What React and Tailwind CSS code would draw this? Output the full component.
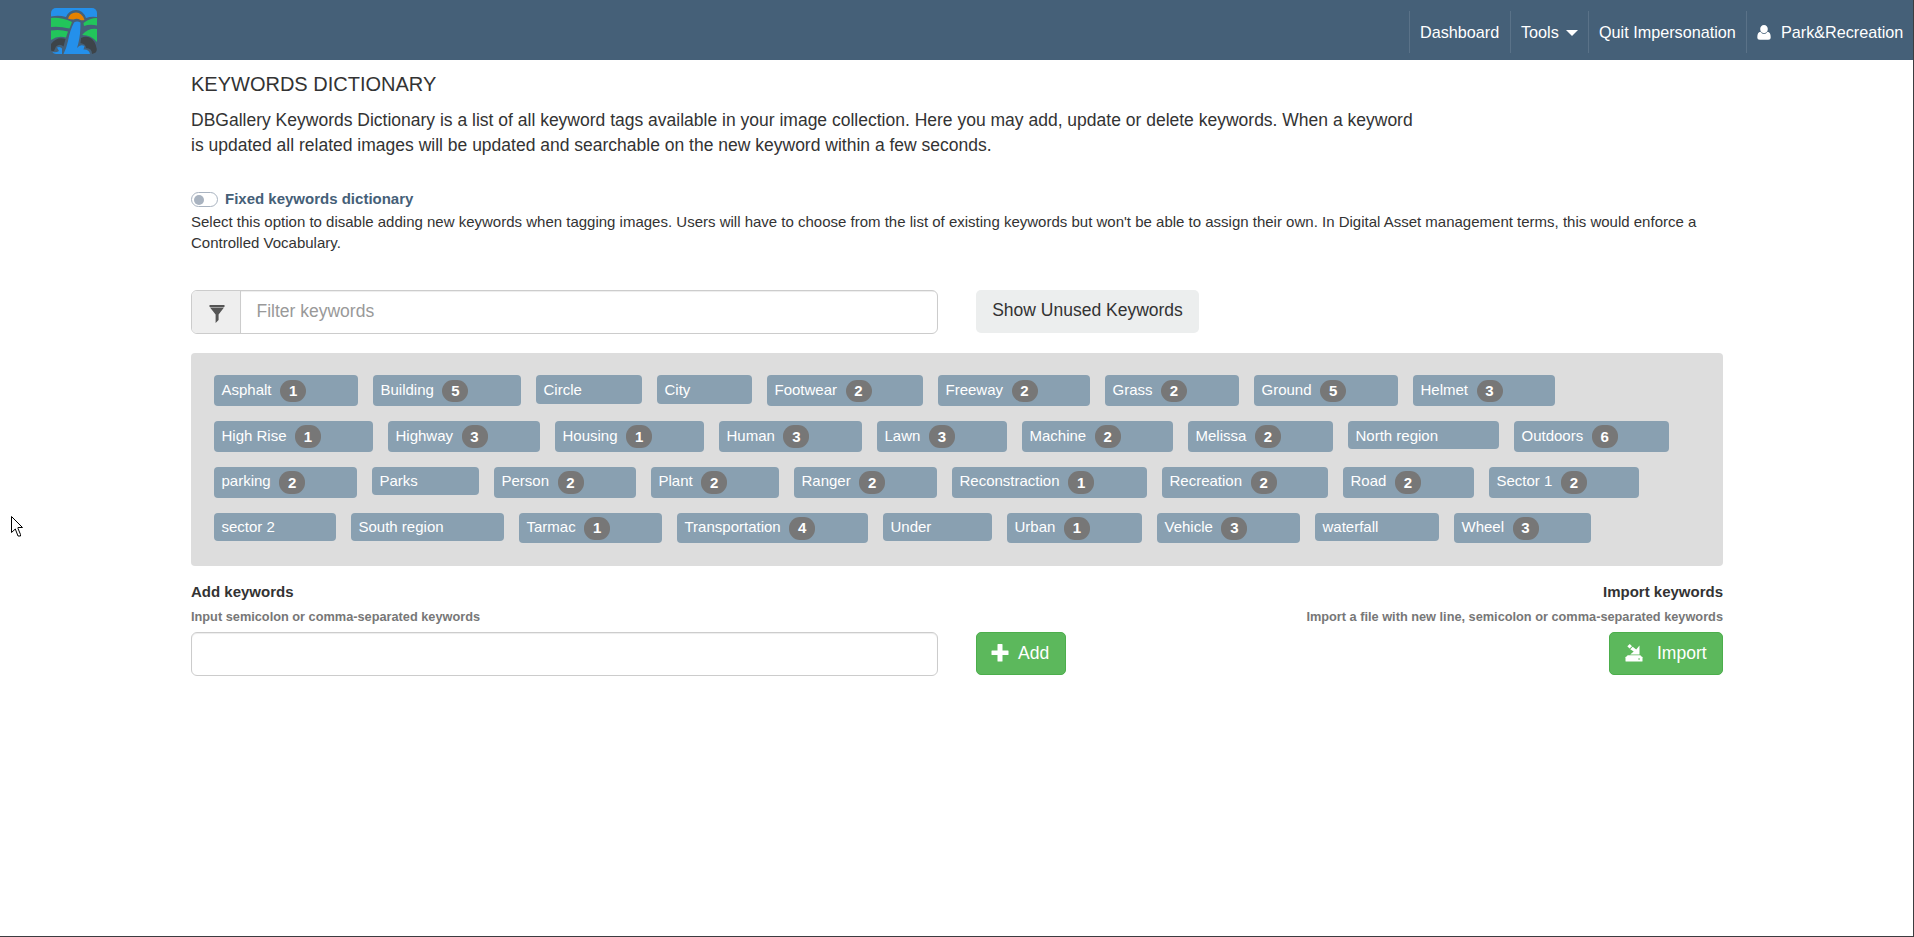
const keywords = [
  ["Asphalt", 1, "w-[144px]"],
  ["Building", 5, "w-[148px]"],
  ["Circle", 0, "w-[106px]"],
  ["City", 0, "w-[95px]"],
  ["Footwear", 2, "w-[156px]"],
  ["Freeway", 2, "w-[152px]"],
  ["Grass", 2, "w-[134px]"],
  ["Ground", 5, "w-[144px]"],
  ["Helmet", 3, "w-[142px]"],
  ["High Rise", 1, "w-[159px]"],
  ["Highway", 3, "w-[152px]"],
  ["Housing", 1, "w-[149px]"],
  ["Human", 3, "w-[143px]"],
  ["Lawn", 3, "w-[130px]"],
  ["Machine", 2, "w-[151px]"],
  ["Melissa", 2, "w-[145px]"],
  ["North region", 0, "w-[151px]"],
  ["Outdoors", 6, "w-[155px]"],
  ["parking", 2, "w-[143px]"],
  ["Parks", 0, "w-[107px]"],
  ["Person", 2, "w-[142px]"],
  ["Plant", 2, "w-[128px]"],
  ["Ranger", 2, "w-[143px]"],
  ["Reconstraction", 1, "w-[195px]"],
  ["Recreation", 2, "w-[166px]"],
  ["Road", 2, "w-[131px]"],
  ["Sector 1", 2, "w-[150px]"],
  ["sector 2", 0, "w-[122px]"],
  ["South region", 0, "w-[153px]"],
  ["Tarmac", 1, "w-[143px]"],
  ["Transportation", 4, "w-[191px]"],
  ["Under", 0, "w-[109px]"],
  ["Urban", 1, "w-[135px]"],
  ["Vehicle", 3, "w-[143px]"],
  ["waterfall", 0, "w-[124px]"],
  ["Wheel", 3, "w-[137px]"],
];

function Logo() {
  return (
    <svg className="size-[46px]" viewBox="0 0 46 46">
      <defs>
        <clipPath id="logo-clip"><rect width="46" height="46" rx="5" /></clipPath>
      </defs>
      <g clipPath="url(#logo-clip)">
        <path d="M0 0H46V9Q40 8 35 10Q32 2 25 2Q18 2 15 9Q8 7 0 8.500Z" fill="#2490eb" />
        <path d="M17 10.500Q19 4.500 25 4.500Q31 4.500 33.500 12Q31 12.500 29.500 12Q26 10 22.500 11.500Q19 11.500 17 10.500Z" fill="#e68200" />
        <path d="M0 10Q10 9 21 14L18.500 20.500Q8 18 0 19Z" fill="#22c55b" />
        <path d="M0 22.500Q9 21 17 23.500L15 29.500Q7 27 0 32Z" fill="#22c55b" />
        <path d="M32.500 15Q39 10 46 10V17.500Q39 16 33 18Z" fill="#22c55b" />
        <path d="M31.500 26.500Q37 20 46 21V34Q40 27 31.500 27Z" fill="#22c55b" />
        <path d="M0 36Q6 28 14.500 31L12.500 38.500Q9 35 5 38.500L3 43H0Z" fill="#3d4449" />
        <path d="M30 30Q36 27 41 31Q46 36 46 45L41 46Q41 40 35 40Q35 36 29.500 35Z" fill="#3d4449" />
        <path d="M23 14.500Q26 12.500 29.500 14.500Q29.500 27 27.500 34.500Q27 37 26 40Q29 36 33.500 38L32.500 41.500Q38 41 39 46H12.500Q15.500 40 17 33Q19 22 23 14.500Z" fill="#2490eb" />
        <path d="M1.500 44Q5 45 8 43L6 39.500Q9 38 11 40.500V46H2Z" fill="#2490eb" />
      </g>
    </svg>
  );
}

function UserIcon() {
  return (
    <svg className="h-[15px] w-[14px]" viewBox="0 0 14 15" fill="currentColor">
      <path d="M7 0C9.300 0 10.800 1.800 10.800 4C10.800 6.300 9.300 8.200 7 8.200C4.700 8.200 3.200 6.300 3.200 4C3.200 1.800 4.700 0 7 0ZM3.500 6.800Q5 9 7 9Q9 9 10.500 6.800Q13.700 7.300 13.700 12.200Q13.700 14.700 11.200 14.700H2.800Q.3 14.700 .3 12.200Q.3 7.300 3.500 6.800Z" />
    </svg>
  );
}

function FilterIcon() {
  return (
    <svg className="h-[18px] w-4" viewBox="0 0 16 18" fill="currentColor">
      <path d="M.5 0H15.500V2H.5ZM1 2.500H15L9.600 9.500V15L6.600 18V9.500Z" />
    </svg>
  );
}

function PlusIcon() {
  return (
    <svg className="size-[18px]" viewBox="0 0 18 18" fill="currentColor">
      <path d="M7 0H11Q11.500 0 11.500 .5V6.500H17Q17.500 6.500 17.500 7V10.500Q17.500 11 17 11H11.500V17Q11.500 17.500 11 17.500H7Q6.500 17.500 6.500 17V11H1Q.5 11 .5 10.500V7Q.5 6.500 1 6.500H6.500V.5Q6.500 0 7 0Z" />
    </svg>
  );
}

function ImportIcon() {
  return (
    <svg className="size-[18px]" viewBox="0 0 18 18" fill="currentColor">
      <path d="M4.800 0L7 2.200L4.500 4.500L2.300 2.300ZM5.200 5.200L7.700 2.800L11.200 5.400L14.500 1.500V10.500H5.200L8.700 7.400Z" />
      <path d="M2.600 11.200H15.400L17 13.200H1Z" />
      <path d="M1 12.700H17Q17.500 12.700 17.500 13.200V17Q17.500 17.500 17 17.500H1Q.5 17.500 .5 17V13.200Q.5 12.700 1 12.700Z" />
      <path d="M13.200 14.500H15V15.500H13.200Z" fill="#5cb85c" />
    </svg>
  );
}

function Keyword({ name, count, width }) {
  return (
    <div className={`${width} ${count ? "h-[30.7px]" : "h-[28.3px]"} flex items-start rounded bg-[#89a0b1] pl-[7.5px]`}>
      <span className="whitespace-nowrap pt-[3.4px] text-[15px] leading-[21px] text-white">{name}</span>
      {count > 0 && (
        <span className="ml-[8.5px] mt-[4.3px] flex h-[22.7px] w-[26px] items-center justify-center rounded-[11px] bg-[#777] pb-px text-[15px] font-bold leading-none text-white">{count}</span>
      )}
    </div>
  );
}

export default function App() {
  return (
    <div className="relative h-[937px] w-[1914px] overflow-hidden border-b border-r border-[#3c3c40] bg-white font-['Liberation_Sans',Arial,sans-serif] text-[#333]">
      <header className="flex h-[60px] items-start justify-between bg-[#456078] pl-[51px] text-[16.2px] text-white">
        <div className="pt-2"><Logo /></div>
        <nav className="mt-[11px] flex h-[42px] leading-[42px]">
          <a className="w-[101px] border-l border-[#5a7288] pl-[10px]">Dashboard</a>
          <a className="flex w-[78px] border-l border-[#5a7288] pl-[10px]">
            Tools
            <svg className="ml-[7px] mt-[19px] h-[6px] w-3" viewBox="0 0 12 6"><path d="M0 0H12L6 6Z" fill="#fff" /></svg>
          </a>
          <a className="w-[158px] whitespace-nowrap border-l border-[#5a7288] pl-[10px]">Quit Impersonation</a>
          <a className="flex w-[167px] border-l border-[#5a7288] pl-[10px]">
            <span className="mt-[14px] leading-none"><UserIcon /></span>
            <span className="ml-[10px]">Park&amp;Recreation</span>
          </a>
        </nav>
      </header>

      <main className="ml-[191px] w-[1532px]">
        <h1 className="pt-[13px] text-[20px] leading-[22px]">KEYWORDS DICTIONARY</h1>
        <p className="mt-[13px] w-[1226px] text-[17.5px] leading-[25px]">
          DBGallery Keywords Dictionary is a list of all keyword tags available in your image collection. Here you may add, update or delete keywords. When a keyword is updated all related images will be updated and searchable on the new keyword within a few seconds.
        </p>

        <div className="mt-[31px] flex h-[21px] items-center">
          <span className="flex h-[15px] w-[27px] items-center rounded-full border border-[#a9b3c0] pl-[2px]">
            <span className="size-[10px] rounded-full bg-[#a9b3c0]" />
          </span>
          <span className="ml-[7px] pb-px text-[15px] font-bold text-[#456078]">Fixed keywords dictionary</span>
        </div>
        <p className="mt-px text-[15px] leading-[21px]">
          Select this option to disable adding new keywords when tagging images. Users will have to choose from the list of existing keywords but won't be able to assign their own. In Digital Asset management terms, this would enforce a Controlled Vocabulary.
        </p>

        <div className="mt-[37px] flex items-start">
          <div className="flex h-[44px] w-[747px] overflow-hidden rounded-md border border-[#ccc] text-[17.5px]">
            <span className="flex w-[49px] items-center justify-center border-r border-[#ccc] bg-[#eee] pl-[2px] pt-[3px] text-[#555]"><FilterIcon /></span>
            <span className="flex-1 pl-[15.5px] leading-[41px] text-[#999] shadow-[inset_0_1px_1px_rgba(0,0,0,0.075)]">Filter keywords</span>
          </div>
          <button className="ml-[38px] h-[43px] w-[223px] rounded-[5px] bg-[#eceeee] pb-[2px] text-[17.5px] leading-[41px]">Show Unused Keywords</button>
        </div>

        <div className="mt-[19px] flex h-[213px] flex-wrap content-start items-start gap-x-[15px] rounded bg-[#ddd] pl-[23px] pr-[20px] pt-[22.4px]">
          {keywords.map(([name, count, width]) => (
            <div key={name} className="h-[45.75px]"><Keyword name={name} count={count} width={width} /></div>
          ))}
        </div>

        <div className="mt-[15px] flex justify-between text-[15px] font-bold leading-[21px]">
          <span>Add keywords</span>
          <span>Import keywords</span>
        </div>
        <div className="mt-[6px] flex justify-between text-[12.75px] font-bold leading-[18px] text-[#777]">
          <span>Input semicolon or comma-separated keywords</span>
          <span>Import a file with new line, semicolon or comma-separated keywords</span>
        </div>
        <div className="mt-[6px] flex items-start text-[17.5px] text-white">
          <div className="h-[44px] w-[747px] rounded-md border border-[#ccc] shadow-[inset_0_1px_1px_rgba(0,0,0,0.075)]" />
          <button className="ml-[38px] flex h-[43px] w-[90px] items-center rounded-[5px] border border-[#4cae4c] bg-[#5cb85c] pb-px pl-[14px]">
            <span className="-mt-px"><PlusIcon /></span><span className="ml-[9px]">Add</span>
          </button>
          <button className="ml-auto flex h-[43px] w-[114px] items-center rounded-[5px] border border-[#4cae4c] bg-[#5cb85c] pb-px pl-[15px]">
            <span className="-mt-px"><ImportIcon /></span><span className="ml-[14px]">Import</span>
          </button>
        </div>
      </main>

      <svg className="absolute left-[11px] top-[516px] h-[21px] w-[13px]" viewBox="0 0 13 21">
        <path d="M.5 .5V16.500L4.300 13L7 20H9.500V18.500L7 12.500V11.500H11.500Z" fill="#fff" stroke="#000" />
      </svg>
    </div>
  );
}
